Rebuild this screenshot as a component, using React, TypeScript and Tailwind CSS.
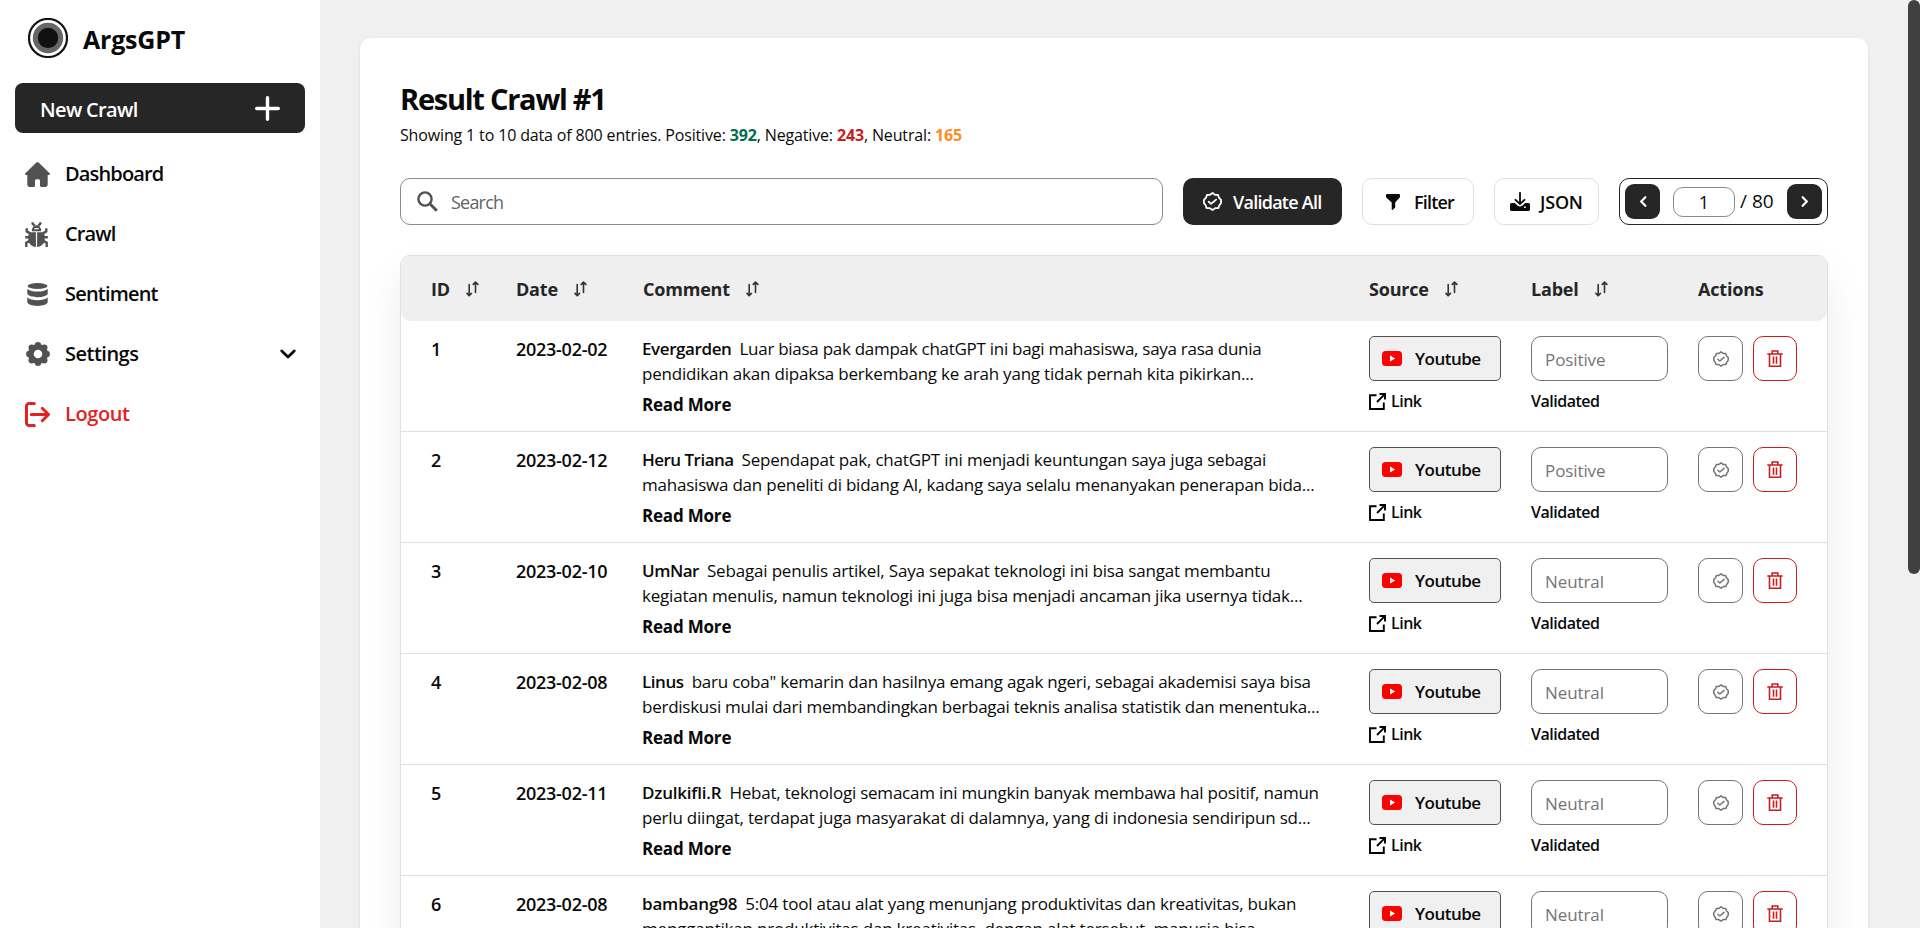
import React from "react";

type Row = {
  id: number;
  date: string;
  author: string;
  authorClass: string;
  first: string;
  firstClass: string;
  second: string;
  secondClass: string;
  label: string;
};

const rows: Row[] = [
  { id: 1, date: "2023-02-02", author: "Evergarden", authorClass: "tracking-[-0.4px]", first: "Luar biasa pak dampak chatGPT ini bagi mahasiswa, saya rasa dunia", firstClass: "tracking-[-0.28px]", second: "pendidikan akan dipaksa berkembang ke arah yang tidak pernah kita pikirkan...", secondClass: "tracking-[-0.2px]", label: "Positive" },
  { id: 2, date: "2023-02-12", author: "Heru Triana", authorClass: "tracking-[-0.52px]", first: "Sependapat pak, chatGPT ini menjadi keuntungan saya juga sebagai", firstClass: "tracking-[-0.2px]", second: "mahasiswa dan peneliti di bidang AI, kadang saya selalu menanyakan penerapan bida...", secondClass: "tracking-[-0.22px]", label: "Positive" },
  { id: 3, date: "2023-02-10", author: "UmNar", authorClass: "tracking-[-0.48px]", first: "Sebagai penulis artikel, Saya sepakat teknologi ini bisa sangat membantu", firstClass: "tracking-[-0.18px]", second: "kegiatan menulis, namun teknologi ini juga bisa menjadi ancaman jika usernya tidak...", secondClass: "tracking-[-0.2px]", label: "Neutral" },
  { id: 4, date: "2023-02-08", author: "Linus", authorClass: "tracking-[-0.44px]", first: "baru coba\" kemarin dan hasilnya emang agak ngeri, sebagai akademisi saya bisa", firstClass: "tracking-[-0.22px]", second: "berdiskusi mulai dari membandingkan berbagai teknis analisa statistik dan menentuka...", secondClass: "tracking-[-0.25px]", label: "Neutral" },
  { id: 5, date: "2023-02-11", author: "Dzulkifli.R", authorClass: "tracking-[-0.21px]", first: "Hebat, teknologi semacam ini mungkin banyak membawa hal positif, namun", firstClass: "tracking-[-0.22px]", second: "perlu diingat, terdapat juga masyarakat di dalamnya, yang di indonesia sendiripun sd...", secondClass: "tracking-[-0.2px]", label: "Neutral" },
  { id: 6, date: "2023-02-08", author: "bambang98", authorClass: "tracking-[-0.16px]", first: "5:04 tool atau alat yang menunjang produktivitas dan kreativitas, bukan", firstClass: "tracking-[-0.22px]", second: "menggantikan produktivitas dan kreativitas, dengan alat tersebut, manusia bisa...", secondClass: "tracking-[-0.2px]", label: "Neutral" },
];

const COLS = "grid grid-cols-[85px_127px_726px_162px_167px_1fr] pl-[30px]";

function LogoMark() {
  return (
    <svg className="size-10" viewBox="0 0 40 40">
      <circle cx="20" cy="20" r="19" fill="#fff" stroke="#111" strokeWidth="2.2" />
      <circle cx="20" cy="20" r="15.2" fill="#666" />
      <circle cx="20" cy="20" r="10.2" fill="#111" />
    </svg>
  );
}

function HomeIcon() {
  return (
    <svg className="size-[25px]" viewBox="0 0 25 25" fill="#525252">
      <path d="M11.4.6c.6-.6 1.600-.6 2.200 0L24.600 11.300c.7.7.4 1.700-.6 1.700h-1.300v9.800c0 1.200-.9 2.200-2.200 2.200h-4.300c-.7 0-1.200-.5-1.200-1.200v-5c0-.9-.7-1.600-1.600-1.600h-1.800c-.9 0-1.600.7-1.600 1.600v5c0 .7-.5 1.200-1.200 1.200H4.500c-1.300 0-2.200-1-2.200-2.200V13H1c-1 0-1.300-1-.6-1.700z" />
    </svg>
  );
}

function BugIcon() {
  return (
    <svg className="mr-[2px] h-[25px] w-[23px]" viewBox="0 0 23 25" fill="none" stroke="#525252" strokeWidth="2.400" strokeLinejoin="round">
      <path d="M7.600.2v1.400L9.600 3.600M15.400.2v1.400L13.400 3.600" />
      <path d="M6.800 9.300c0-3.600 1.800-6 4.700-6s4.700 2.400 4.700 6z" fill="#525252" stroke="none" />
      <path d="M9.300 6.700h4.400" stroke="#fff" strokeWidth="1.200" />
      <path d="M1.700 6.200v3.200L5.500 11.600M21.300 6.200v3.200L17.500 11.600M.2 15.300H5M22.800 15.300H18M5.500 18.600l-4.200 2V25M17.500 18.600l4.200 2V25" />
      <path d="M10.900 10.300v14.700C6.500 24.600 3.300 21.500 3.300 17.500v-3.200c0-2.300 1.400-4 3.500-4zM12.100 10.300v14.700c4.400-.4 7.600-3.500 7.600-7.500v-3.200c0-2.300-1.400-4-3.500-4z" fill="#525252" stroke="none" />
    </svg>
  );
}

function StackIcon() {
  return (
    <svg className="h-[23px] w-[21px]" viewBox="0 0 21 23" fill="#525252">
      <ellipse cx="10.500" cy="3" rx="10" ry="3" />
      <path d="M.3 6c2 1.700 5.700 2.600 10.200 2.600S18.700 7.700 20.700 6v4.500c0 2-4.600 3.700-10.200 3.700S.3 12.500.3 10.500zM.3 14.500c2 1.700 5.700 2.700 10.200 2.700s8.200-1 10.200-2.700v4.600c0 2.100-4.600 3.800-10.200 3.800S.3 21.200.3 19.100z" />
    </svg>
  );
}

function GearIcon() {
  return (
    <svg className="size-6" viewBox="0 0 24 24">
      <g fill="#525252">
        <circle cx="12" cy="12" r="10" />
        <circle cx="12" cy="3.300" r="3.200" /><circle cx="12" cy="20.700" r="3.200" />
        <circle cx="3.300" cy="12" r="3.200" /><circle cx="20.700" cy="12" r="3.200" />
        <circle cx="5.700" cy="5.700" r="3.200" /><circle cx="18.300" cy="5.700" r="3.200" />
        <circle cx="5.700" cy="18.300" r="3.200" /><circle cx="18.300" cy="18.300" r="3.200" />
      </g>
      <circle cx="12" cy="12" r="4.300" fill="#fff" />
    </svg>
  );
}

function LogoutIcon() {
  return (
    <svg className="h-[25px] w-[25px]" viewBox="0 0 25 25" fill="none" stroke="#e02424" strokeWidth="3" strokeLinecap="round" strokeLinejoin="round">
      <path d="M9.300 1.500H4A2.500 2.500 0 0 0 1.500 4v17A2.500 2.500 0 0 0 4 23.500h5.300M6.300 12.500h17M17.300 6.300l6.200 6.200-6.200 6.200" />
    </svg>
  );
}

function BadgeCheck({ className }: { className: string }) {
  return (
    <svg className={className} viewBox="0 0 20 20" fill="none" stroke="currentColor" strokeWidth="1.900" strokeLinejoin="round" strokeLinecap="round">
      <path d="M10 1.100 12.600 3h3.200l1 3 2.200 2.200v3.500L17.200 14l-1 3h-3.400L10 18.900 7.200 17H3.800l-1-3L1 11.700V8.200L3.200 6l1-3h3.200z" />
      <path d="m6 10.300 2.500 2.200L13.800 8" />
    </svg>
  );
}

function SortIcon() {
  return (
    <svg className="h-4 w-[13px]" viewBox="0 0 13 16" fill="none" stroke="#333" strokeWidth="1.600" strokeLinecap="round" strokeLinejoin="round">
      <path d="M3.200 3.500v11M1 12.400l2.200 2.300 2.200-2.300M9.500 11.500V1.200M7.300 3.400l2.200-2.300 2.400 2.300" />
    </svg>
  );
}

function FilterIcon() {
  return (
    <svg className="mr-[14px] h-4 w-[14px]" viewBox="0 0 14 16" fill="#0a0a0a">
      <path d="M1.300 0h11.400C13.500 0 14 .5 14 1.200v1.300c0 .5-.2.9-.5 1.200L9.200 8.600v4.600c0 .4-.2.700-.5.900l-2 1.600c-.5.400-1 .1-1-.5V8.600L.5 3.700C.2 3.400 0 3 0 2.500V1.200C0 .5.500 0 1.300 0z" />
    </svg>
  );
}

function DownloadIcon() {
  return (
    <svg className="mr-[10px] h-[19px] w-5" viewBox="0 0 20 19" fill="none">
      <path d="M1.500 11h3.300l3 2.700c1.300 1.100 3.100 1.100 4.400 0l3-2.700h3.300c.9 0 1.500.6 1.500 1.500v5c0 .9-.6 1.500-1.500 1.500h-17C.6 19 0 18.400 0 17.500v-5C0 11.600.6 11 1.500 11z" fill="#0a0a0a" />
      <path d="M10 .8v11M5.500 7.800l4.500 4.200 4.500-4.200" stroke="#0a0a0a" strokeWidth="1.800" strokeLinecap="round" />
      <circle cx="15" cy="15.200" r=".9" fill="#fff" />
    </svg>
  );
}

function YoutubeIcon() {
  return (
    <svg className="h-[15px] w-5" viewBox="0 0 20 15">
      <rect width="20" height="15" rx="3.500" fill="#f00" />
      <path d="m8 4.500 5.200 3L8 10.500z" fill="#fff" />
    </svg>
  );
}

function LinkIcon() {
  return (
    <svg className="h-[17px] w-[17px]" viewBox="0 0 17 17" fill="none" stroke="#000" strokeWidth="1.900">
      <path d="M7.500 2.200H1v13.800h13.800V9.500M10.500 1H16v5.500M15.800 1.200 8 9" />
    </svg>
  );
}

function TrashIcon() {
  return (
    <svg className="h-[17px] w-4" viewBox="0 0 16 17" fill="none" stroke="#c81e1e" strokeWidth="1.600">
      <path d="M.3 4h15.400M2.500 4.300v11.900h11V4.300M5.200 3.700V1h5.600v2.700M6.500 6.500v7.300M9.500 6.500v7.300" />
    </svg>
  );
}

function SearchIcon() {
  return (
    <svg className="h-[21px] w-[21px]" viewBox="0 0 21 21" fill="none" stroke="#525252">
      <circle cx="8" cy="8" r="6.600" strokeWidth="2.400" />
      <path d="m12.800 12.800 7 7" strokeWidth="3" />
    </svg>
  );
}

function Chevron({ d, className, width }: { d: string; className: string; width: string }) {
  return (
    <svg className={className} viewBox="0 0 16 16" fill="none" stroke="currentColor" strokeWidth={width} strokeLinecap="round" strokeLinejoin="round">
      <path d={d} />
    </svg>
  );
}

function NavItem({ icon, text, className, children }: { icon: React.ReactNode; text: string; className: string; children?: React.ReactNode }) {
  return (
    <div className="flex h-[60px] items-center pr-6 pl-[25px]">
      <span className="flex w-[25px] justify-center">{icon}</span>
      <span className={"ml-[15px] text-xl font-semibold " + className}>{text}</span>
      {children}
    </div>
  );
}

function Sidebar() {
  return (
    <aside className="flex h-full w-80 shrink-0 flex-col bg-white">
      <div className="flex h-[83px] items-start pt-[18px] pl-7">
        <LogoMark />
        <span className="mt-[3px] ml-[15px] text-[25px] leading-9 font-bold tracking-[-0.2px]">ArgsGPT</span>
      </div>
      <div className="mx-[15px] mb-[11px] flex h-[50px] items-center justify-between rounded-lg bg-[#262626] pr-[25px] pl-[25px] text-white">
        <span className="pt-[3px] text-xl font-semibold tracking-[-0.65px]">New Crawl</span>
        <svg className="size-[25px]" viewBox="0 0 25 25" stroke="#fff" strokeWidth="3.400" strokeLinecap="round">
          <path d="M12.500 1.700v21.600M1.700 12.500h21.600" />
        </svg>
      </div>
      <NavItem icon={<HomeIcon />} text="Dashboard" className="tracking-[-0.85px]" />
      <NavItem icon={<BugIcon />} text="Crawl" className="tracking-[-0.85px]" />
      <NavItem icon={<StackIcon />} text="Sentiment" className="tracking-[-0.8px]" />
      <NavItem icon={<GearIcon />} text="Settings" className="tracking-[-0.5px]">
        <Chevron d="m1.800 5 6.200 6 6.200-6" className="ml-auto size-4" width="2.800" />
      </NavItem>
      <NavItem icon={<LogoutIcon />} text="Logout" className="tracking-[-0.4px] text-[#e02424]" />
    </aside>
  );
}

function Toolbar() {
  return (
    <div className="mt-[30px] flex h-[47px] items-stretch gap-5">
      <div className="flex w-[763px] items-center rounded-[10px] border border-[#8a8a8a] pl-4">
        <SearchIcon />
        <span className="ml-[13px] text-lg tracking-[-0.8px] text-[#636363]">Search</span>
      </div>
      <div className="flex w-[159px] items-center rounded-[10px] bg-[#262626] pl-5 text-white">
        <BadgeCheck className="mr-[11px] size-[19px]" />
        <span className="text-lg font-semibold tracking-[-0.75px] whitespace-nowrap">Validate All</span>
      </div>
      <div className="flex w-28 items-center rounded-[10px] border border-[#e0e0e0] pl-[23px]">
        <FilterIcon />
        <span className="text-lg font-semibold tracking-[-0.8px]">Filter</span>
      </div>
      <div className="flex w-[105px] items-center rounded-[10px] border border-[#e0e0e0] pl-[15px]">
        <DownloadIcon />
        <span className="text-lg font-semibold tracking-[-0.2px]">JSON</span>
      </div>
      <div className="flex w-[209px] items-center rounded-[10px] border border-[#262626] pl-[5px]">
        <span className="flex size-[35px] items-center justify-center rounded-[9px] bg-[#262626] text-white">
          <Chevron d="m10 3.500-4.500 4.500 4.500 4.500" className="ml-px size-[15px]" width="2.400" />
        </span>
        <span className="ml-[13px] flex h-[30px] w-[62px] items-center justify-center rounded-[10px] border border-[#8a8a8a] text-lg">1</span>
        <span className="ml-[5px] w-[47px] text-[19px] whitespace-nowrap">/ 80</span>
        <span className="flex size-[35px] items-center justify-center rounded-[9px] bg-[#262626] text-white">
          <Chevron d="m6 3.500 4.500 4.500-4.500 4.500" className="size-[15px]" width="2.400" />
        </span>
      </div>
    </div>
  );
}

function Head({ text, sortable = true }: { text: string; sortable?: boolean }) {
  return (
    <div className="flex items-center gap-4">
      <span>{text}</span>
      {sortable && <SortIcon />}
    </div>
  );
}

function TableRow({ row }: { row: Row }) {
  return (
    <div className={COLS + " h-[111px] border-b border-[#e0e0e0] pt-[15px] text-lg leading-[25px]"}>
      <span className="pt-px font-semibold">{row.id}</span>
      <span className="pt-px font-semibold tracking-[-0.27px]">{row.date}</span>
      <div className="-ml-px text-[17px] whitespace-nowrap">
        <p className="flex gap-2">
          <span className={"font-semibold " + row.authorClass}>{row.author}</span>
          <span className={row.firstClass}>{row.first}</span>
        </p>
        <p className={row.secondClass}>{row.second}</p>
        <p className="pt-[6px] font-bold tracking-[-0.2px]">Read More</p>
      </div>
      <div>
        <div className="flex h-[45px] w-[132px] items-center rounded-[5px] border border-[#525252] bg-[#f0f0f0] pl-3">
          <YoutubeIcon />
          <span className="ml-[13px] text-[17px] font-semibold tracking-[-0.5px]">Youtube</span>
        </div>
        <div className="mt-[8px] flex items-center gap-[5px] text-base leading-[25px] font-semibold tracking-[-0.5px]">
          <LinkIcon />
          <span>Link</span>
        </div>
      </div>
      <div>
        <div className="flex h-[45px] w-[137px] items-center rounded-[10px] border border-[#757575] pt-px pl-[13px] text-[17px] font-medium tracking-[-0.1px] text-[#757575]">
          {row.label}
        </div>
        <p className="mt-[8px] text-base leading-[25px] font-semibold tracking-[-0.5px]">Validated</p>
      </div>
      <div className="flex gap-[10px]">
        <span className="flex h-[45px] w-[45px] items-center justify-center rounded-[10px] border border-[#757575] text-[#757575]">
          <BadgeCheck className="size-4" />
        </span>
        <span className="flex h-[45px] w-11 items-center justify-center rounded-[10px] border border-[#c81e1e]">
          <TrashIcon />
        </span>
      </div>
    </div>
  );
}

export default function App() {
  return (
    <div className="flex h-[928px] w-full overflow-hidden bg-[#f0f0f0] font-['Open_Sans','Noto_Sans',sans-serif] text-[#0a0a0a]">
      <Sidebar />
      <main className="ml-10 w-[1508px] shrink-0 pt-[38px]">
        <section className="h-[1300px] rounded-[10px] bg-white px-10 pt-[39px] shadow-sm">
          <h1 className="h-[43px] text-[29px] leading-[43px] font-bold tracking-[-1.25px]">Result Crawl #1</h1>
          <p className="mt-[3px] h-[25px] text-base leading-[25px] tracking-[-0.15px]">
            Showing 1 to 10 data of 800 entries. Positive: <b className="text-[#046c4e]">392</b>, Negative:{" "}
            <b className="text-[#c81e1e]">243</b>, Neutral: <b className="text-[#ff8a1f]">165</b>
          </p>
          <Toolbar />
          <div className="mt-[30px] rounded-[10px] border border-[#e0e0e0] bg-white shadow-[0_20px_40px_rgba(0,0,0,0.08)]">
            <div className={COLS + " h-[65px] items-center rounded-[10px] bg-[#efefef] text-lg font-bold tracking-[-0.2px] text-[#262626]"}>
              <Head text="ID" />
              <Head text="Date" />
              <Head text="Comment" />
              <Head text="Source" />
              <Head text="Label" />
              <Head text="Actions" sortable={false} />
            </div>
            {rows.map((row) => (
              <TableRow key={row.id} row={row} />
            ))}
          </div>
        </section>
      </main>
      <div className="ml-auto h-[574px] w-3 rounded-md bg-[#404040]" />
    </div>
  );
}
